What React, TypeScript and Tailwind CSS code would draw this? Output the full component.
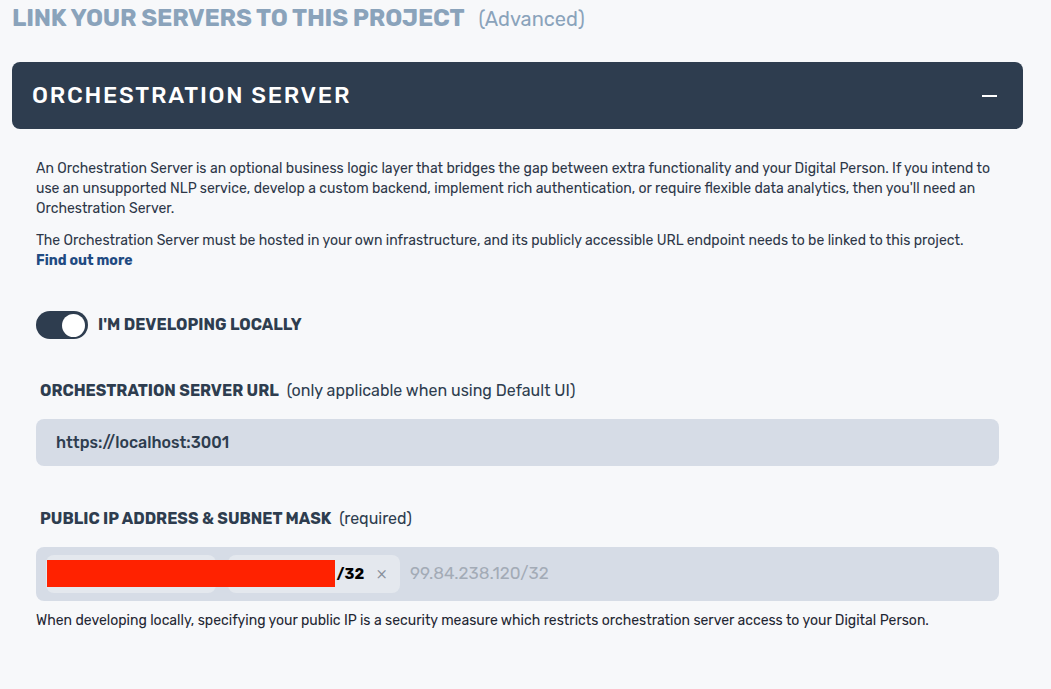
import React from "react";

export default function App() {
  const font = { fontFamily: "Rubik, Inter, 'Noto Sans', sans-serif" };
  return (
    <div className="min-h-[689px] w-[1051px] bg-[#f7f8fa] text-[#2d3748]" style={font}>
      <div className="px-3 pt-[4px]">
        <div className="flex items-baseline gap-[14px] h-[28px]">
          <h1 className="text-[24px] font-bold tracking-[-0.2px] text-[#8aa3bb] leading-[28px]">
            LINK YOUR SERVERS TO THIS PROJECT
          </h1>
          <span className="text-[20px] text-[#8aa3bb] leading-[28px]">(Advanced)</span>
        </div>
        <div className="mt-[30px] w-[1011px] h-[67px] rounded-[8px] bg-[#2e3d4f] flex items-center justify-between pl-5 pr-[26px]">
          <span className="text-white text-[23px] font-medium tracking-[1.75px]">ORCHESTRATION SERVER</span>
          <span className="block w-[15px] h-[2px] bg-white mt-[1px]" />
        </div>
      </div>
      <div className="pl-9 pr-[40px] pt-[30px]">
        <p className="text-[14px] leading-[20px] text-[#2d3748] w-[963px]">
          An Orchestration Server is an optional business logic layer that bridges the gap between extra functionality and your Digital Person. If you intend to use an unsupported NLP service, develop a custom backend, implement rich authentication, or require flexible data analytics, then you'll need an Orchestration Server.
        </p>
        <p className="mt-[12px] text-[14px] leading-[20px] text-[#2d3748]">
          The Orchestration Server must be hosted in your own infrastructure, and its publicly accessible URL endpoint needs to be linked to this project.
          <br />
          <a className="font-bold text-[#1f4b82]">Find out more</a>
        </p>
        <div className="mt-[40px] flex items-center gap-[10px]">
          <div className="w-[52px] h-[28px] rounded-full bg-[#2e3d4f] flex items-center justify-end pr-[3px]">
            <div className="w-[23px] h-[23px] rounded-full bg-white" />
          </div>
          <span className="text-[16px] font-bold text-[#2e3d4f]">I'M DEVELOPING LOCALLY</span>
        </div>
        <div className="mt-[40px] pl-1 flex items-baseline gap-[8px]">
          <span className="text-[16px] font-bold text-[#2e3d4f]">ORCHESTRATION SERVER URL</span>
          <span className="text-[16px] text-[#2e3d4f]">(only applicable when using Default UI)</span>
        </div>
        <div className="mt-[16px] w-[963px] h-[47px] rounded-[8px] bg-[#d6dce6] flex items-center px-5">
          <span className="text-[16px] font-medium text-[#2e3d4f]">https://localhost:3001</span>
        </div>
        <div className="mt-[41px] pl-1 flex items-baseline gap-[8px]">
          <span className="text-[16px] font-bold text-[#2e3d4f]">PUBLIC IP ADDRESS &amp; SUBNET MASK</span>
          <span className="text-[16px] text-[#2e3d4f]">(required)</span>
        </div>
        <div className="mt-[16px] w-[963px] h-[54px] rounded-[8px] bg-[#d6dce6] flex items-center pl-[10px] gap-[12px]">
          <div className="relative h-[38px] w-[170px] rounded-[8px] bg-[#e4e8ee] flex items-center">
            <div className="absolute left-[1px] top-[5px] h-[27px] w-[288px] bg-[#ff2200] z-10" />
          </div>
          <div className="h-[38px] w-[172px] rounded-[8px] bg-[#e4e8ee] flex items-center justify-end pr-[13px] gap-[12px]">
            <span className="text-[15px] font-bold text-black">/32</span>
            <span className="text-[20px] font-light text-[#8a919c] leading-none">×</span>
          </div>
          <span className="-ml-[2px] text-[17px] text-[#a3abb6]">99.84.238.120/32</span>
        </div>
        <p className="mt-[10px] text-[14px] leading-[20px] text-[#1f2733]">
          When developing locally, specifying your public IP is a security measure which restricts orchestration server access to your Digital Person.
        </p>
      </div>
    </div>
  );
}
